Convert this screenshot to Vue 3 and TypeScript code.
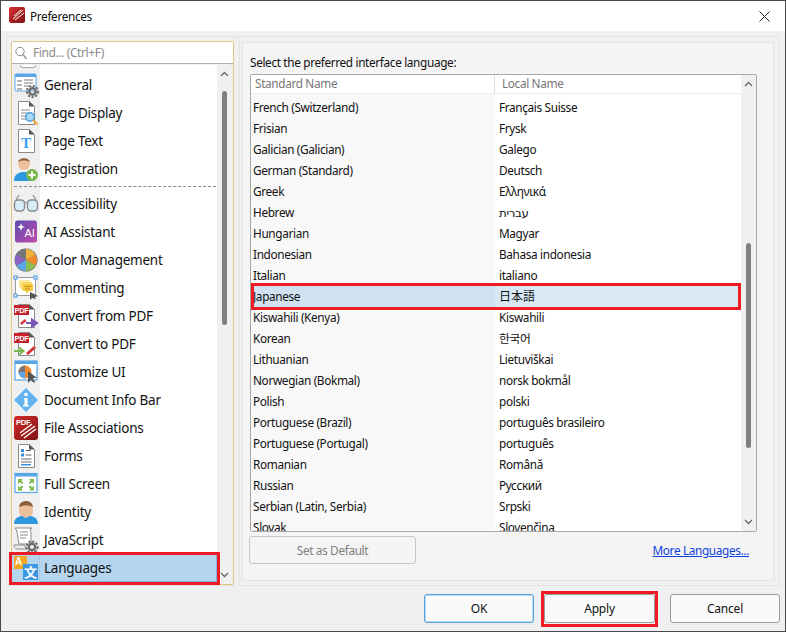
<script setup lang="ts">
const gear = (x: number, y: number, c = '#6b6b6b') =>
  `<circle cx="${x}" cy="${y}" r="5.6" fill="none" stroke="${c}" stroke-width="2" stroke-dasharray="2.2 1.5"/><circle cx="${x}" cy="${y}" r="3.2" fill="none" stroke="${c}" stroke-width="2.4"/>`
const page = `<path d="M5.5 1.5h11l5 5v18h-16z" fill="#fff" stroke="#8a8a8a"/><path d="M16 1.5l5.5 5h-5.5z" fill="#555"/>`
const pdfTag = `<rect x="1" y="2" width="15" height="10" fill="#c8202b"/><text x="8.5" y="10" font-size="7.5" font-weight="700" fill="#fff" text-anchor="middle" font-family="Liberation Sans">PDF</text>`

const icons: Record<string, string> = {
  top: `<rect x="7.5" y="10.5" width="15" height="13" rx="1.5" fill="#fff" stroke="#a8a8a8"/>`,
  general: `<rect x="2" y="2" width="21" height="17" rx="1" fill="#fff" stroke="#58a6e6"/><rect x="2" y="2" width="21" height="3" fill="#58a6e6"/><path d="M4 8h5v2H4zM4 12h5v2H4zM4 16h5v2H4z" fill="#b3b3b3"/><path d="M11 8h9M11 11h9M11 14h6" stroke="#7a7a7a"/>${gear(19.5, 19.5)}`,
  display: `${page}<path d="M8 10h9M8 13h7M8 16h5M8 19h5" stroke="#8a8a8a"/><circle cx="17" cy="17" r="4.3" fill="#a6d8f7" stroke="#4d9bd9" stroke-width="1.4"/><path d="M20 20l4.5 4.5" stroke="#f0a43a" stroke-width="2"/>`,
  text: `${page}<text x="12.8" y="20" font-size="15" font-weight="700" fill="#3ba0ea" text-anchor="middle" font-family="Liberation Serif">T</text>`,
  reg: `<circle cx="11" cy="8" r="6" fill="#eebf9c"/><path d="M5 6c1-5 11-5 12 0-3-2-9-2-12 0z" fill="#8b5f3c"/><path d="M1 25c0-7 5-9 10-9s10 2 10 9z" fill="#2f97e0"/><circle cx="19" cy="19" r="6" fill="#7ab648"/><path d="M19 15.5v7M15.5 19h7" stroke="#fff" stroke-width="2"/>`,
  access: `<path d="M3 9l3-5M23 9l-3-5" stroke="#8a8a8a" stroke-width="1.2" fill="none"/><rect x="1.5" y="9" width="10" height="11" rx="3.5" fill="#d6ecf8" stroke="#8a8a8a" stroke-width="1.4"/><rect x="14.5" y="9" width="10" height="11" rx="3.5" fill="#d6ecf8" stroke="#8a8a8a" stroke-width="1.4"/><path d="M11.5 12q2-1.5 3 0" stroke="#8a8a8a" fill="none"/>`,
  ai: `<defs><linearGradient id="aig" x1="0" y1="0" x2="1" y2="1"><stop offset="0" stop-color="#5c4bb3"/><stop offset="1" stop-color="#c04aa8"/></linearGradient></defs><rect x="2" y="1.5" width="22" height="22" rx="2.5" fill="url(#aig)"/><text x="16.5" y="18" font-size="11" fill="#fff" text-anchor="middle" font-family="Liberation Sans">AI</text><path d="M8 4l1 3 3 1-3 1-1 3-1-3-3-1 3-1z" fill="#fff"/>`,
  color: `<circle cx="13" cy="13" r="11.5" fill="#666"/><path d="M13 13V2a11 11 0 0 1 9.5 5.5z" fill="#f2b33d"/><path d="M13 13l9.5-5.5a11 11 0 0 1 0 11z" fill="#f28b30"/><path d="M13 13l9.5 5.5A11 11 0 0 1 13 24z" fill="#8cc152"/><path d="M13 13v11a11 11 0 0 1-9.5-5.5z" fill="#5da7e8"/><path d="M13 13L3.5 18.5a11 11 0 0 1 0-11z" fill="#8a63c4"/><path d="M13 13L3.5 7.5A11 11 0 0 1 13 2z" fill="#777"/>`,
  comment: `<path d="M2.5 2.5h20v18h-20z" fill="#fff" stroke="#9a9a9a"/><rect x="1" y="1" width="3" height="3" fill="#fff" stroke="#3b8fe0"/><rect x="21" y="1" width="3" height="3" fill="#fff" stroke="#3b8fe0"/><rect x="1" y="19" width="3" height="3" fill="#fff" stroke="#3b8fe0"/><rect x="6" y="5" width="11" height="8" fill="#fbe7a0"/><rect x="8" y="7" width="11" height="8" fill="#f9da6b"/><path d="M10 9h10v7h-4l-3 3v-3h-3z" fill="#f6c63f"/><path d="M12 11.5h6M12 14h5" stroke="#b88a1a" stroke-width=".8"/><path d="M17 17v8l2-2 4 1-1-2 3-1z" fill="#555"/>`,
  fromPdf: `${page}${pdfTag}<path d="M7 20l5-4 1.5 2-5 4z" fill="#d8323a"/><path d="M13 20h9M19 16.5l5 3.5-5 3.5z" stroke="#7a55b8" stroke-width="2" fill="#7a55b8"/>`,
  toPdf: `${page}${pdfTag}<path d="M1 20h8M6 16.5l4.5 3.5-4.5 3.5" stroke="#7ab648" stroke-width="2" fill="none"/><path d="M13 22l8-7 2 2-8 7z" fill="#d8323a"/>`,
  custom: `<rect x="2" y="2" width="22" height="19" fill="#fff" stroke="#58a6e6" stroke-width="1.2"/><rect x="2" y="2" width="22" height="3" fill="#58a6e6"/><circle cx="12" cy="13" r="6.5" fill="#f28b30"/><path d="M12 13V6.5A6.5 6.5 0 0 0 5.5 13z" fill="#777"/><path d="M12 13H5.5A6.5 6.5 0 0 0 12 19.5z" fill="#5da7e8"/><path d="M15 12v12l3-3 3 3 1-1-2-4h4z" fill="#555"/>`,
  info: `<path d="M13 1l12 12-12 12L1 13z" fill="#63b3ee" stroke="#a9d6f7"/><circle cx="13" cy="7.5" r="1.8" fill="#fff"/><path d="M11 11h3.5v7H16v1.5h-6V18h1.5v-5.5H11z" fill="#fff"/>`,
  assoc: `<defs><linearGradient id="asg" x1="0" y1="0" x2="1" y2="1"><stop offset="0" stop-color="#d52c2c"/><stop offset="1" stop-color="#7c1212"/></linearGradient></defs><rect x="1" y="1" width="24" height="24" rx="3" fill="url(#asg)"/><text x="3" y="10" font-size="7.5" font-weight="700" fill="#fff" font-family="Liberation Sans">PDF</text><path d="M8 21L22 11M11 23l12-9M7 18l12-9" stroke="#fff" stroke-width="1.3"/>`,
  forms: `${page}<rect x="8" y="6" width="3" height="3" fill="#3b8fe0"/><path d="M12.5 7.5H18" stroke="#666"/><rect x="8" y="10.5" width="3" height="3" fill="#3b8fe0"/><path d="M12.5 12h6" stroke="#666"/><path d="M8 16h10.5M8 19h10.5" stroke="#666"/><rect x="8" y="21" width="10" height="1.5" fill="#3b8fe0"/>`,
  full: `<rect x="2" y="2.5" width="22" height="19" fill="#fff" stroke="#58a6e6" stroke-width="1.2"/><rect x="2" y="2.5" width="22" height="3" fill="#58a6e6"/><path d="M5 8h5L8.3 9.7l2 2-1.4 1.4-2-2L5 13zM21 8h-5l1.7 1.7-2 2 1.4 1.4 2-2L21 13zM5 19.5h5l-1.7-1.7 2-2-1.4-1.4-2 2L5 14.7zM21 19.5h-5l1.7-1.7-2-2 1.4-1.4 2 2 1.9-1.7z" fill="#7ab648"/>`,
  identity: `<path d="M6 9c0-9 14-9 14 0v3c0 9-14 9-14 0z" fill="#eebf9c"/><path d="M6 8c1-8 13-8 14 0-3-2-10-2-14 0z" fill="#8b5f3c"/><path d="M1 25c0-6 5-8 8-8l4 2 4-2c3 0 8 2 8 8z" fill="#2f97e0"/>`,
  js: `<path d="M2 1h17c-2 1-2 3-1 4v12H6C5 15 5 3 2 1z" fill="#fff" stroke="#8a8a8a"/><path d="M7 5h8M7 8h8M7 11h6" stroke="#8a8a8a"/><path d="M1 18h10c1 1 1 3 3 4H4c-2 0-3-2-3-4z" fill="#eee" stroke="#8a8a8a"/>${gear(19, 20)}`,
  lang: `<rect x="1" y="1" width="13" height="13" fill="#f5a623"/><text x="5.5" y="10" font-size="10" font-weight="700" fill="#fff" text-anchor="middle" font-family="Liberation Sans">A</text><rect x="10" y="9" width="15" height="16" fill="#3b97e3"/><text x="17.5" y="22" font-size="13" font-weight="700" fill="#fff" text-anchor="middle" font-family="Noto Sans CJK SC">文</text>`,
}

const prefs = [
  { label: '', icon: 'top' },
  { label: 'General', icon: 'general' },
  { label: 'Page Display', icon: 'display' },
  { label: 'Page Text', icon: 'text' },
  { label: 'Registration', icon: 'reg', sep: true },
  { label: 'Accessibility', icon: 'access' },
  { label: 'AI Assistant', icon: 'ai' },
  { label: 'Color Management', icon: 'color' },
  { label: 'Commenting', icon: 'comment' },
  { label: 'Convert from PDF', icon: 'fromPdf' },
  { label: 'Convert to PDF', icon: 'toPdf' },
  { label: 'Customize UI', icon: 'custom' },
  { label: 'Document Info Bar', icon: 'info' },
  { label: 'File Associations', icon: 'assoc' },
  { label: 'Forms', icon: 'forms' },
  { label: 'Full Screen', icon: 'full' },
  { label: 'Identity', icon: 'identity' },
  { label: 'JavaScript', icon: 'js' },
  { label: 'Languages', icon: 'lang', active: true },
]

const languages: [string, string][] = [
  ['French (Switzerland)', 'Français Suisse'],
  ['Frisian', 'Frysk'],
  ['Galician (Galician)', 'Galego'],
  ['German (Standard)', 'Deutsch'],
  ['Greek', 'Ελληνικά'],
  ['Hebrew', 'עברית'],
  ['Hungarian', 'Magyar'],
  ['Indonesian', 'Bahasa indonesia'],
  ['Italian', 'italiano'],
  ['Japanese', '日本語'],
  ['Kiswahili (Kenya)', 'Kiswahili'],
  ['Korean', '한국어'],
  ['Lithuanian', 'Lietuviškai'],
  ['Norwegian (Bokmal)', 'norsk bokmål'],
  ['Polish', 'polski'],
  ['Portuguese (Brazil)', 'português brasileiro'],
  ['Portuguese (Portugal)', 'português'],
  ['Romanian', 'Română'],
  ['Russian', 'Русский'],
  ['Serbian (Latin, Serbia)', 'Srpski'],
  ['Slovak', 'Slovenčina'],
]
</script>

<template>
  <div class="window">
    <header class="titlebar">
      <svg class="logo" width="16" height="16" viewBox="0 0 16 16">
        <defs>
          <linearGradient id="lg" x1="0" y1="0" x2="1" y2="1">
            <stop offset="0" stop-color="#d9302f" />
            <stop offset="1" stop-color="#7f1212" />
          </linearGradient>
        </defs>
        <rect width="16" height="16" rx="2" fill="url(#lg)" />
        <path d="M4 12L14 3M6 13l9-7M5 9l7-6" stroke="#fff" stroke-width="1" />
      </svg>
      <span class="title">Preferences</span>
      <svg class="close" width="11" height="11" viewBox="0 0 11 11">
        <path d="M.5.5l10 10M10.5.5l-10 10" stroke="#222" stroke-width="1" />
      </svg>
    </header>

    <main class="main">
      <section class="left-group">
        <div class="gold">
          <div class="search">
            <svg width="12" height="14" viewBox="0 0 12 14">
              <circle cx="5" cy="5.5" r="4.2" fill="none" stroke="#8c8c8c" />
              <path d="M8 8.5l3.5 4.5" stroke="#8c8c8c" stroke-width="1.3" />
            </svg>
            <span>Find... (Ctrl+F)</span>
          </div>
          <div class="list-wrap">
            <div class="pref-scroll">
              <div class="pref-list">
                <template v-for="p in prefs" :key="p.icon">
                  <div class="pref" :class="{ active: p.active }">
                    <span class="pref-icon">
                      <svg width="26" height="26" viewBox="0 0 26 26" v-html="icons[p.icon]"></svg>
                    </span>
                    <span class="pref-label">{{ p.label }}</span>
                  </div>
                  <div v-if="p.sep" class="pref-sep"><i></i></div>
                </template>
              </div>
            </div>
            <div class="vbar left-bar">
              <svg class="chev" width="9" height="6" viewBox="0 0 9 6"><path d="M1 5l3.5-3.5L8 5" fill="none" stroke="#666" stroke-width="1.3" /></svg>
              <div class="thumb left-thumb"></div>
              <svg class="chev end" width="9" height="6" viewBox="0 0 9 6"><path d="M1 1l3.5 3.5L8 1" fill="none" stroke="#666" stroke-width="1.3" /></svg>
            </div>
          </div>
        </div>
      </section>

      <section class="right-group">
        <div class="inner">
          <p class="lead">Select the preferred interface language:</p>
          <div class="table">
            <div class="table-main">
              <div class="thead">
                <div class="th first">Standard Name</div>
                <div class="th second">Local Name</div>
              </div>
              <div class="tbody">
                <div v-for="l in languages" :key="l[0]" class="tr" :class="{ sel: l[0] === 'Japanese' }">
                  <div class="td first">{{ l[0] }}</div>
                  <div class="td second">{{ l[1] }}</div>
                </div>
              </div>
            </div>
            <div class="vbar right-bar">
              <svg class="chev" width="9" height="6" viewBox="0 0 9 6"><path d="M1 5l3.5-3.5L8 5" fill="none" stroke="#666" stroke-width="1.3" /></svg>
              <div class="thumb right-thumb"></div>
              <svg class="chev end" width="9" height="6" viewBox="0 0 9 6"><path d="M1 1l3.5 3.5L8 1" fill="none" stroke="#666" stroke-width="1.3" /></svg>
            </div>
          </div>
          <div class="under">
            <button class="default" type="button">Set as Default</button>
            <a class="more">More Languages...</a>
          </div>
        </div>
      </section>
    </main>

    <footer class="footer">
      <button class="btn ok" type="button">OK</button>
      <button class="btn apply" type="button">Apply</button>
      <button class="btn cancel" type="button">Cancel</button>
    </footer>

    <div class="mark mark-lang"></div>
    <div class="mark mark-jp"></div>
    <div class="mark mark-apply"></div>
  </div>
</template>

<style>
html, body { margin: 0; background: #f0f0f0; }
</style>

<style scoped>
* { box-sizing: border-box; }
.window {
  position: relative;
  width: 786px;
  height: 632px;
  display: flex;
  flex-direction: column;
  background: #f0f0f0;
  border: 1px solid #4a4a4a;
  font-family: "Noto Sans", "Noto Sans CJK JP", "DejaVu Sans", sans-serif;
  color: #111;
  overflow: hidden;
}
.titlebar {
  height: 30px;
  flex: none;
  display: flex;
  align-items: center;
  background: #fff;
  padding: 0 15px 0 8px;
}
.logo { margin-bottom: 2px; }
.title { margin-left: 5px; font-size: 11.8px; letter-spacing: -0.35px; }
.close { margin-left: auto; }
.main {
  height: 555px;
  flex: none;
  display: flex;
  padding: 5px 5px 0 5px;
  gap: 1px;
}
.left-group {
  width: 232px;
  border: 1px solid #e4e4e4;
  border-right: 0;
  padding: 4px 0 1px 4px;
}
.gold {
  width: 223px;
  height: 544px;
  border: 1px solid #e2c77e;
  border-radius: 2px;
  display: flex;
  flex-direction: column;
  background: #f0f0f0;
}
.search {
  height: 22px;
  flex: none;
  background: #fff;
  border-bottom: 1px solid #b0b0b0;
  display: flex;
  align-items: center;
  gap: 6px;
  padding-left: 3px;
  color: #8a8a8a;
  font-size: 12px;
  letter-spacing: -0.4px;
}
.list-wrap {
  flex: 1;
  min-height: 0;
  display: flex;
  margin-top: 1px;
}
.pref-scroll {
  width: 205px;
  overflow: hidden;
  background: #fff;
}
.pref-list { margin-top: -22px; }
.pref {
  height: 28px;
  display: flex;
  align-items: center;
  font-size: 13.5px;
  letter-spacing: -0.25px;
  background: #fff;
}
.pref.active {
  background: #b5d5ef;
  box-shadow: inset 0 0 0 1px #7fb4de;
}
.pref-icon {
  width: 28px;
  height: 28px;
  flex: none;
  display: flex;
  align-items: center;
  justify-content: center;
  background: #f0f0f0;
}
.pref.active .pref-icon { background: #b5d5ef; border-right: 1px solid #a5c8e4; }
.pref-label { margin-left: 4px; white-space: nowrap; }
.pref-sep {
  height: 7px;
  display: flex;
  align-items: flex-start;
  padding: 3px 1px 0 2px;
  background: linear-gradient(90deg, #f0f0f0 28px, #fff 28px);
}
.pref-sep i { display: block; width: 100%; border-top: 1px dashed #8a8a8a; }
.vbar {
  flex: none;
  width: 15px;
  background: #f0f0f0;
  display: flex;
  flex-direction: column;
  align-items: center;
}
.chev { flex: none; margin-top: 6px; }
.chev.end { margin-top: auto; margin-bottom: 6px; }
.thumb { width: 5px; background: #808080; border-radius: 3px; flex: none; }
.left-thumb { height: 234px; margin-top: 14px; }
.right-group {
  flex: 1;
  border: 1px solid #e4e4e4;
  padding: 5px 5px 4px 2px;
  min-width: 0;
}
.inner {
  height: 100%;
  background: #f4f4f4;
  border: 1px solid #e4e4e4;
  border-radius: 2px;
  padding: 9px 16px 0 7px;
}
.lead { margin: 0; font-size: 11.8px; letter-spacing: -0.35px; line-height: 20px; height: 22px; }
.table {
  width: 507px;
  height: 458px;
  display: flex;
  background: #f0f0f0;
  border: 1px solid #a8a8a8;
  border-radius: 2px;
  overflow: hidden;
}
.table-main { width: 490px; flex: none; display: flex; flex-direction: column; overflow: hidden; background: #f8f8f8; }
.thead {
  height: 19px;
  flex: none;
  display: flex;
  background: #fff;
  border-bottom: 1px solid #ececec;
  color: #777;
  font-size: 11.8px;
  letter-spacing: -0.35px;
  line-height: 16px;
}
.th.first { width: 244px; padding-left: 4px; border-right: 1px solid #dcdcdc; }
.th.second { flex: 1; padding-left: 7px; }
.tbody { padding-top: 3px; overflow: hidden; flex: 1; background: linear-gradient(90deg, #f8f8f8 244px, #fff 244px); }
.tr { height: 21px; display: flex; font-size: 11.8px; letter-spacing: -0.35px; line-height: 21px; }
.td { white-space: nowrap; }
.td.first { width: 244px; padding-left: 2px; }
.td.second { flex: 1; padding-left: 4px; }
.tr.sel .td.first { background: #d0e2f0; }
.tr.sel .td.second { background: #d9e8f5; font-size: 12px; letter-spacing: 0; }
.right-thumb { height: 205px; margin-top: 156px; }
.under {
  display: flex;
  align-items: flex-start;
  justify-content: space-between;
  margin: 4px 0 0 -1px;
  width: 500px;
}
.default {
  width: 167px;
  height: 28px;
  background: #f4f4f4;
  border: 1px solid #c6c6c6;
  border-radius: 3px;
  color: #808080;
  font: inherit;
  font-size: 11.8px;
  letter-spacing: -0.35px;
  padding: 0;
}
.more { margin-top: 5px; color: #0f3fe0; text-decoration: underline; font-size: 11.8px; letter-spacing: -0.35px; line-height: 18px; }
.footer {
  flex: 1;
  display: flex;
  justify-content: flex-end;
  align-items: flex-start;
  padding: 8px 5px 0 0;
}
.btn {
  width: 110px;
  height: 29px;
  background: #fafafa;
  border: 1px solid #9a9a9a;
  border-radius: 3px;
  font: inherit;
  font-size: 12px;
  letter-spacing: -0.2px;
  color: #111;
  padding: 0;
}
.ok { border-color: #5a9fd6; box-shadow: inset 0 0 0 1px #b4dcf6; }
.apply { width: 111px; margin-left: 10px; }
.cancel { margin-left: 15px; }
.mark { position: absolute; border: 3px solid #ed1c24; pointer-events: none; }
.mark-lang { left: 8px; top: 551px; width: 211px; height: 33px; }
.mark-jp { left: 250px; top: 282px; width: 490px; height: 27px; }
.mark-apply { left: 540px; top: 590px; width: 117px; height: 36px; }
</style>
